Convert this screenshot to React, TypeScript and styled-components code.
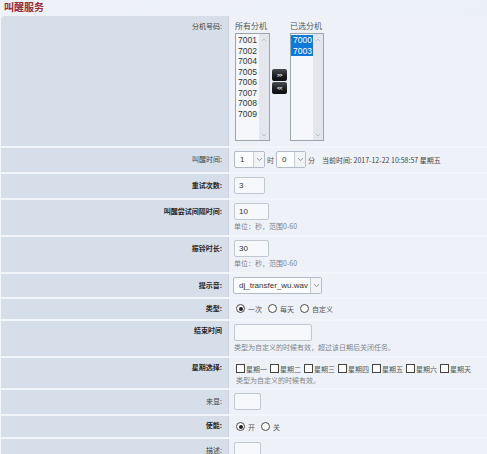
import React from 'react';
import styled, { createGlobalStyle } from 'styled-components';

const GlobalStyle = createGlobalStyle`
  body {
    margin: 0;
    background: #edf1f7;
    font-family: "Liberation Sans", "Noto Sans CJK SC", sans-serif;
    color: #333;
  }
`;

const cjk = `"Noto Sans CJK SC", "Liberation Sans", sans-serif`;
const latin = `"Liberation Sans", "Noto Sans CJK SC", sans-serif`;

const Chevron = () => (
  <svg width="7" height="5" viewBox="0 0 7 5">
    <path d="M1 1.2 L3.5 3.6 L6 1.2" fill="none" stroke="#8a939e" strokeWidth="1" />
  </svg>
);

const ScrollArrow = ({ up }: { up?: boolean }) => (
  <svg width="6" height="4" viewBox="0 0 6 4">
    <path
      d={up ? 'M0.8 3.2 L3 1 L5.2 3.2' : 'M0.8 0.8 L3 3 L5.2 0.8'}
      fill="none"
      stroke="#b9c0c9"
      strokeWidth="0.9"
    />
  </svg>
);

const App = () => {
  const allExt = ['7001', '7002', '7004', '7005', '7006', '7007', '7008', '7009'];
  const chosen = ['7000', '7003'];
  const days = ['星期一', '星期二', '星期三', '星期四', '星期五', '星期六', '星期天'];

  return (
    <Page>
      <GlobalStyle />
      <Title>叫醒服务</Title>
      <Form>
        <Row $first>
          <Label $top={5} $line={11}>分机号码:</Label>
          <Value $pad="4px 4px 5px 6px">
            <Transfer>
              <ListColumn>
                <Caption>所有分机</Caption>
                <ListBox $width={35}>
                  <Options>
                    {allExt.map((n) => (
                      <Option key={n}>{n}</Option>
                    ))}
                  </Options>
                  <Track>
                    <ScrollArrow up />
                    <ScrollArrow />
                  </Track>
                </ListBox>
              </ListColumn>
              <Buttons>
                <MoveButton>&gt;&gt;</MoveButton>
                <MoveButton>&lt;&lt;</MoveButton>
              </Buttons>
              <ListColumn>
                <Caption>已选分机</Caption>
                <ListBox $width={34}>
                  <Options>
                    {chosen.map((n) => (
                      <Option key={n} $selected>
                        {n}
                      </Option>
                    ))}
                  </Options>
                  <Track>
                    <ScrollArrow up />
                    <ScrollArrow />
                  </Track>
                </ListBox>
              </ListColumn>
            </Transfer>
          </Value>
        </Row>

        <Row>
          <Label>叫醒时间:</Label>
          <Value>
            <Inline>
              <Select $width={31}>
                <span>1</span>
                <Arrow><Chevron /></Arrow>
              </Select>
              <Unit>时</Unit>
              <Select $width={30}>
                <span>0</span>
                <Arrow><Chevron /></Arrow>
              </Select>
              <Unit>分</Unit>
              <Clock>当前时间: 2017-12-22 10:58:57 星期五</Clock>
            </Inline>
          </Value>
        </Row>

        <Row>
          <Label $bold>重试次数:</Label>
          <Value>
            <Input $width={31}>3</Input>
          </Value>
        </Row>

        <Row>
          <Label $bold>叫醒尝试间隔时间:</Label>
          <Value>
            <Input $width={35}>10</Input>
            <Hint>单位：秒，范围0-60</Hint>
          </Value>
        </Row>

        <Row>
          <Label $bold>振铃时长:</Label>
          <Value>
            <Input $width={35}>30</Input>
            <Hint>单位：秒，范围0-60</Hint>
          </Value>
        </Row>

        <Row>
          <Label $bold>提示音:</Label>
          <Value $pad="3px 4px 3px 4px">
            <Select $width={89}>
              <span>dj_transfer_wu.wav</span>
              <Arrow><Chevron /></Arrow>
            </Select>
          </Value>
        </Row>

        <Row>
          <Label $bold $line={13}>类型:</Label>
          <Value $pad="3px 4px 4px 7px">
            <Inline $gap={6}>
              <Choice>
                <Radio $checked />
                <ChoiceText>一次</ChoiceText>
              </Choice>
              <Choice>
                <Radio />
                <ChoiceText>每天</ChoiceText>
              </Choice>
              <Choice>
                <Radio />
                <ChoiceText>自定义</ChoiceText>
              </Choice>
            </Inline>
          </Value>
        </Row>

        <Row>
          <Label $bold $line={13}>结束时间</Label>
          <Value>
            <Input $width={78} />
            <Hint>类型为自定义的时候有效，超过该日期后关闭任务。</Hint>
          </Value>
        </Row>

        <Row>
          <Label $bold $line={13}>星期选择:</Label>
          <Value $pad="4px 4px 3px 7px">
            <Inline $gap={3}>
              {days.map((d) => (
                <Choice key={d} $gap={1}>
                  <Box />
                  <ChoiceText>{d}</ChoiceText>
                </Choice>
              ))}
            </Inline>
            <Hint $tight>类型为自定义的时候有效。</Hint>
          </Value>
        </Row>

        <Row>
          <Label>来显:</Label>
          <Value>
            <Input $width={27} />
          </Value>
        </Row>

        <Row>
          <Label $bold $line={13}>使能:</Label>
          <Value $pad="4px 4px 4px 7px">
            <Inline $gap={6}>
              <Choice>
                <Radio $checked />
                <ChoiceText>开</ChoiceText>
              </Choice>
              <Choice>
                <Radio />
                <ChoiceText>关</ChoiceText>
              </Choice>
            </Inline>
          </Value>
        </Row>

        <Row>
          <Label>描述:</Label>
          <Value>
            <Input $width={27} />
          </Value>
        </Row>
      </Form>
    </Page>
  );
};

export default App;

const Page = styled.div`
  width: 487px;
  height: 454px;
  overflow: hidden;
  background: linear-gradient(160deg, #eef2f8 0%, #e9eef5 60%, #eef2f8 100%);
`;

const Title = styled.div`
  height: 16px;
  padding-left: 4px;
  font-family: ${cjk};
  font-size: 10px;
  font-weight: bold;
  line-height: 13px;
  color: #9b2b36;
`;

const Form = styled.div`
  display: flex;
  flex-direction: column;
  gap: 2px;
  padding-left: 1px;
  background: #f2f5f9;
`;

const Row = styled.div<{ $first?: boolean }>`
  display: grid;
  grid-template-columns: 228px 1fr;
  background: #eef2f8;
  ${(p) => p.$first && 'border-top-left-radius: 4px; overflow: hidden;'}
`;

const Label = styled.div<{ $bold?: boolean; $top?: number; $line?: number }>`
  background: #d6dee9;
  border-right: 1px solid #c8d1dc;
  text-align: right;
  padding: ${(p) => p.$top ?? 3}px 6px 0 0;
  font-family: ${cjk};
  font-size: 7px;
  line-height: ${(p) => p.$line ?? 17}px;
  font-weight: ${(p) => (p.$bold ? 'bold' : 'normal')};
  color: ${(p) => (p.$bold ? '#262626' : '#444')};
  white-space: nowrap;
`;

const Value = styled.div<{ $pad?: string }>`
  padding: ${(p) => p.$pad ?? '3px 4px 4px 5px'};
  min-width: 0;
`;

const Transfer = styled.div`
  display: flex;
  align-items: flex-start;
`;

const ListColumn = styled.div`
  display: flex;
  flex-direction: column;
`;

const Caption = styled.div`
  font-family: ${cjk};
  font-size: 8px;
  line-height: 11px;
  color: #555;
  margin-bottom: 2px;
`;

const ListBox = styled.div<{ $width: number }>`
  width: ${(p) => p.$width}px;
  height: 108px;
  box-sizing: border-box;
  border: 1px solid #9ba4af;
  background: #f5f7fa;
  display: flex;
`;

const Options = styled.div`
  flex: 1;
  padding-top: 1px;
`;

const Option = styled.div<{ $selected?: boolean }>`
  font-family: ${latin};
  font-size: 8.5px;
  line-height: 10.5px;
  padding-left: 2px;
  color: ${(p) => (p.$selected ? '#fff' : '#333')};
  background: ${(p) => (p.$selected ? '#0f78d8' : 'transparent')};
`;

const Track = styled.div`
  width: 10px;
  background: #e3e7ed;
  display: flex;
  flex-direction: column;
  justify-content: space-between;
  align-items: center;
  padding: 4px 0 3px;
`;

const Buttons = styled.div`
  display: flex;
  flex-direction: column;
  gap: 1px;
  margin: 49px 3px 0 2px;
`;

const MoveButton = styled.div`
  width: 15px;
  height: 12px;
  border-radius: 2px;
  background: linear-gradient(#4a4d52 0%, #1c1e22 55%, #0d0e10 100%);
  color: #fff;
  font-family: ${latin};
  font-size: 5px;
  font-weight: bold;
  line-height: 12px;
  text-align: center;
  letter-spacing: -0.5px;
`;

const Inline = styled.div<{ $gap?: number }>`
  display: flex;
  align-items: center;
  gap: ${(p) => p.$gap ?? 2}px;
  white-space: nowrap;
`;

const Select = styled.div<{ $width: number }>`
  width: ${(p) => p.$width}px;
  height: 17px;
  box-sizing: border-box;
  border: 1px solid #b3bcc6;
  border-radius: 2px;
  background: #fbfcfd;
  display: flex;
  align-items: stretch;
  font-family: ${latin};
  font-size: 8px;
  color: #333;
  span {
    flex: 1;
    padding-left: 5px;
    line-height: 15px;
    overflow: hidden;
  }
`;

const Arrow = styled.div`
  width: 10px;
  border-left: 1px solid #c6cdd5;
  background: #f1f3f6;
  display: flex;
  align-items: center;
  justify-content: center;
`;

const Unit = styled.span`
  font-family: ${cjk};
  font-size: 7px;
  color: #555;
`;

const Clock = styled.span`
  font-family: ${cjk};
  font-size: 7px;
  color: #444;
  margin-left: 5px;
`;

const Input = styled.div<{ $width: number }>`
  width: ${(p) => p.$width}px;
  height: 17px;
  box-sizing: border-box;
  border: 1px solid #c0c8d2;
  border-radius: 2px;
  background: #f6f8fb;
  font-family: ${latin};
  font-size: 8px;
  line-height: 15px;
  padding-left: 4px;
  color: #333;
`;

const Hint = styled.div<{ $tight?: boolean }>`
  font-family: ${cjk};
  font-size: 7px;
  line-height: 10px;
  margin-top: ${(p) => (p.$tight ? 0 : 1)}px;
  color: #7d838b;
  white-space: nowrap;
`;

const Choice = styled.span<{ $gap?: number }>`
  display: inline-flex;
  align-items: center;
  gap: ${(p) => p.$gap ?? 3}px;
  height: 13px;
`;

const ChoiceText = styled.span`
  font-family: ${cjk};
  font-size: 7px;
  color: #555;
`;

const Radio = styled.span<{ $checked?: boolean }>`
  width: 9px;
  height: 9px;
  box-sizing: border-box;
  border-radius: 50%;
  border: 1px solid #4a4a4a;
  background: #fff;
  display: inline-flex;
  align-items: center;
  justify-content: center;
  &::after {
    content: '';
    width: 4px;
    height: 4px;
    border-radius: 50%;
    background: ${(p) => (p.$checked ? '#222' : 'transparent')};
  }
`;

const Box = styled.span`
  width: 9px;
  height: 9px;
  box-sizing: border-box;
  border: 1px solid #444;
  background: #fff;
`;
